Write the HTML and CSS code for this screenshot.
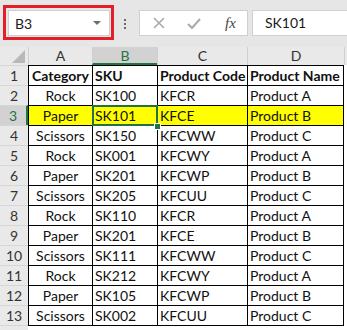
FILE: index.html
```html
<!DOCTYPE html>
<html>
<head>
<meta charset="utf-8">
<link rel="stylesheet" href="styles.css">
</head>
<body>
<div class="toolbar">
  <div class="namebox-hl">
    <div class="namebox"><span>B3</span><span class="caret"></span></div>
  </div>
  <div class="dots"><i></i><i></i><i></i></div>
  <div class="fbtns">
    <svg class="ico-x" width="12" height="12" viewBox="0 0 12 12"><path d="M1 1 L11 11 M11 1 L1 11" stroke="#a9a9a9" stroke-width="1.6" fill="none"/></svg>
    <svg class="ico-check" width="14" height="11" viewBox="0 0 14 11"><path d="M1 6 L5 10 L13 1" stroke="#a9a9a9" stroke-width="2" fill="none"/></svg>
    <span class="fx">fx</span>
  </div>
  <div class="finput">SK101</div>
</div>
<div class="strip"></div>
<div class="sheet">
  <div class="corner"><svg width="13" height="13" viewBox="0 0 13 13"><path d="M13 0 L13 13 L0 13 Z" fill="#b9b9b9"/></svg></div>
  <div class="colh">A</div>
  <div class="colh sel">B</div>
  <div class="colh">C</div>
  <div class="colh">D</div>
  <div class="colh fill"></div>

  <div class="rowh">1</div>
  <div class="c b ctr">Category</div>
  <div class="c b">SKU</div>
  <div class="c b">Product Code</div>
  <div class="c b last">Product Name</div>
  <div class="rest"></div>

  <div class="rowh">2</div>
  <div class="c ctr">Rock</div>
  <div class="c">SK100</div>
  <div class="c">KFCR</div>
  <div class="c last">Product A</div>
  <div class="rest"></div>

  <div class="rowh sel">3</div>
  <div class="c ctr y">Paper</div>
  <div class="c y active">SK101</div>
  <div class="c y">KFCE</div>
  <div class="c y last">Product B</div>
  <div class="rest"></div>

  <div class="rowh">4</div>
  <div class="c ctr">Scissors</div>
  <div class="c">SK150</div>
  <div class="c">KFCWW</div>
  <div class="c last">Product C</div>
  <div class="rest"></div>

  <div class="rowh">5</div>
  <div class="c ctr">Rock</div>
  <div class="c">SK001</div>
  <div class="c">KFCWY</div>
  <div class="c last">Product A</div>
  <div class="rest"></div>

  <div class="rowh">6</div>
  <div class="c ctr">Paper</div>
  <div class="c">SK201</div>
  <div class="c">KFCWP</div>
  <div class="c last">Product B</div>
  <div class="rest"></div>

  <div class="rowh">7</div>
  <div class="c ctr">Scissors</div>
  <div class="c">SK205</div>
  <div class="c">KFCUU</div>
  <div class="c last">Product C</div>
  <div class="rest"></div>

  <div class="rowh">8</div>
  <div class="c ctr">Rock</div>
  <div class="c">SK110</div>
  <div class="c">KFCR</div>
  <div class="c last">Product A</div>
  <div class="rest"></div>

  <div class="rowh">9</div>
  <div class="c ctr">Paper</div>
  <div class="c">SK201</div>
  <div class="c">KFCE</div>
  <div class="c last">Product B</div>
  <div class="rest"></div>

  <div class="rowh">10</div>
  <div class="c ctr">Scissors</div>
  <div class="c">SK111</div>
  <div class="c">KFCWW</div>
  <div class="c last">Product C</div>
  <div class="rest"></div>

  <div class="rowh">11</div>
  <div class="c ctr">Rock</div>
  <div class="c">SK212</div>
  <div class="c">KFCWY</div>
  <div class="c last">Product A</div>
  <div class="rest"></div>

  <div class="rowh">12</div>
  <div class="c ctr">Paper</div>
  <div class="c">SK105</div>
  <div class="c">KFCWP</div>
  <div class="c last">Product B</div>
  <div class="rest"></div>

  <div class="rowh">13</div>
  <div class="c ctr">Scissors</div>
  <div class="c">SK002</div>
  <div class="c">KFCUU</div>
  <div class="c last">Product C</div>
  <div class="rest"></div>

  <div class="rowh"></div>
  <div class="tail"></div>
  <div class="tail"></div>
  <div class="tail"></div>
  <div class="tail"></div>
  <div class="rest"></div>
</div>
</body>
</html>
```

FILE: styles.css
```css
html, body {
  margin: 0;
  padding: 0;
  background: #ffffff;
  overflow: hidden;
  width: 347px;
  height: 330px;
}
body {
  font-family: Lato, "Liberation Sans", sans-serif;
  font-size: 14px;
  color: #000;
}
.toolbar {
  height: 42px;
  box-sizing: border-box;
  background: #e6e6e6;
  padding: 5px 0 0 3px;
  display: flex;
  align-items: flex-start;
}
.namebox-hl {
  width: 111px;
  height: 35px;
  box-sizing: border-box;
  border: 3px solid #e3202a;
  padding: 2px 1px 1px 2px;
  background: #e6e6e6;
}
.namebox {
  height: 100%;
  box-sizing: border-box;
  background: #fff;
  border: 1px solid #cfcfcf;
  display: flex;
  align-items: center;
  padding: 0 8px 0 6px;
  font-size: 14px;
  color: #1a1a1a;
}
.caret {
  margin-left: auto;
  width: 0;
  height: 0;
  border-left: 4px solid transparent;
  border-right: 4px solid transparent;
  border-top: 4px solid #6d6d6d;
}
.dots {
  margin: 14px 0 0 10px;
  display: flex;
  flex-direction: column;
  gap: 2px;
}
.dots i {
  display: block;
  width: 2px;
  height: 2px;
  background: #6a6a6a;
}
.fbtns {
  margin: 5px 0 0 13px;
  width: 109px;
  height: 26px;
  box-sizing: border-box;
  background: #fff;
  border: 1px solid #d0d0d0;
  display: flex;
  align-items: center;
}
.ico-x { margin-left: 13px; }
.ico-check { margin-left: 22px; }
.fx {
  margin-left: 24px;
  font-family: "Liberation Serif", serif;
  font-style: italic;
  font-size: 15px;
  color: #444;
}
.finput {
  margin: 5px 0 0 4px;
  flex: 1;
  height: 26px;
  box-sizing: border-box;
  background: #fff;
  border: 1px solid #d0d0d0;
  border-right: none;
  padding-left: 12px;
  line-height: 24px;
  font-size: 14px;
  color: #1a1a1a;
}
.strip {
  height: 5px;
  background: #e6e6e6;
}
.sheet {
  display: grid;
  grid-template-columns: 28px 64px 65px 90px 97px 1fr;
  grid-template-rows: 18px repeat(14, 20px);
  background: #fff;
}
.corner {
  background: #e9e9e9;
  display: flex;
  align-items: flex-end;
  justify-content: flex-end;
  padding: 0 3px 2px 0;
  box-sizing: border-box;
}
.colh {
  background: #e9e9e9;
  border-left: 1px solid #cfcfcf;
  text-align: center;
  line-height: 18px;
  color: #333;
  box-sizing: border-box;
}
.colh.sel {
  background: #d2d2d2;
  color: #217346;
  border-bottom: 2px solid #217346;
  line-height: 16px;
  padding-top: 1px;
}
.colh.fill {
  border-left: 1px solid #cfcfcf;
}
.rowh {
  background: #e9e9e9;
  border-top: 1px solid #d6d6d6;
  text-align: center;
  line-height: 19px;
  color: #333;
  box-sizing: border-box;
}
.rowh.sel {
  background: #d2d2d2;
  color: #217346;
  border-right: 2px solid #217346;
}
.c {
  border-top: 1px solid #000;
  border-left: 1px solid #000;
  padding: 0 2px;
  line-height: 19px;
  white-space: nowrap;
  overflow: visible;
  box-sizing: border-box;
  color: #111;
}
.c.last {
  border-right: 1px solid #000;
}
.c.b { font-weight: bold; }
.c.ctr { text-align: center; }
.c.y { background: #ffff00; }
.c.active {
  position: relative;
  z-index: 3;
}
.c.active::after {
  content: "";
  position: absolute;
  left: -1px;
  top: -1px;
  right: -1px;
  bottom: -1px;
  border: 2px solid #217346;
  pointer-events: none;
}
.c.active::before {
  content: "";
  position: absolute;
  right: -4px;
  bottom: -5px;
  width: 5px;
  height: 5px;
  background: #217346;
  border: 1px solid #fff;
  z-index: 2;
}
.tail {
  border-top: 1px solid #000;
}
.rest {
  background: #fff;
}
```
